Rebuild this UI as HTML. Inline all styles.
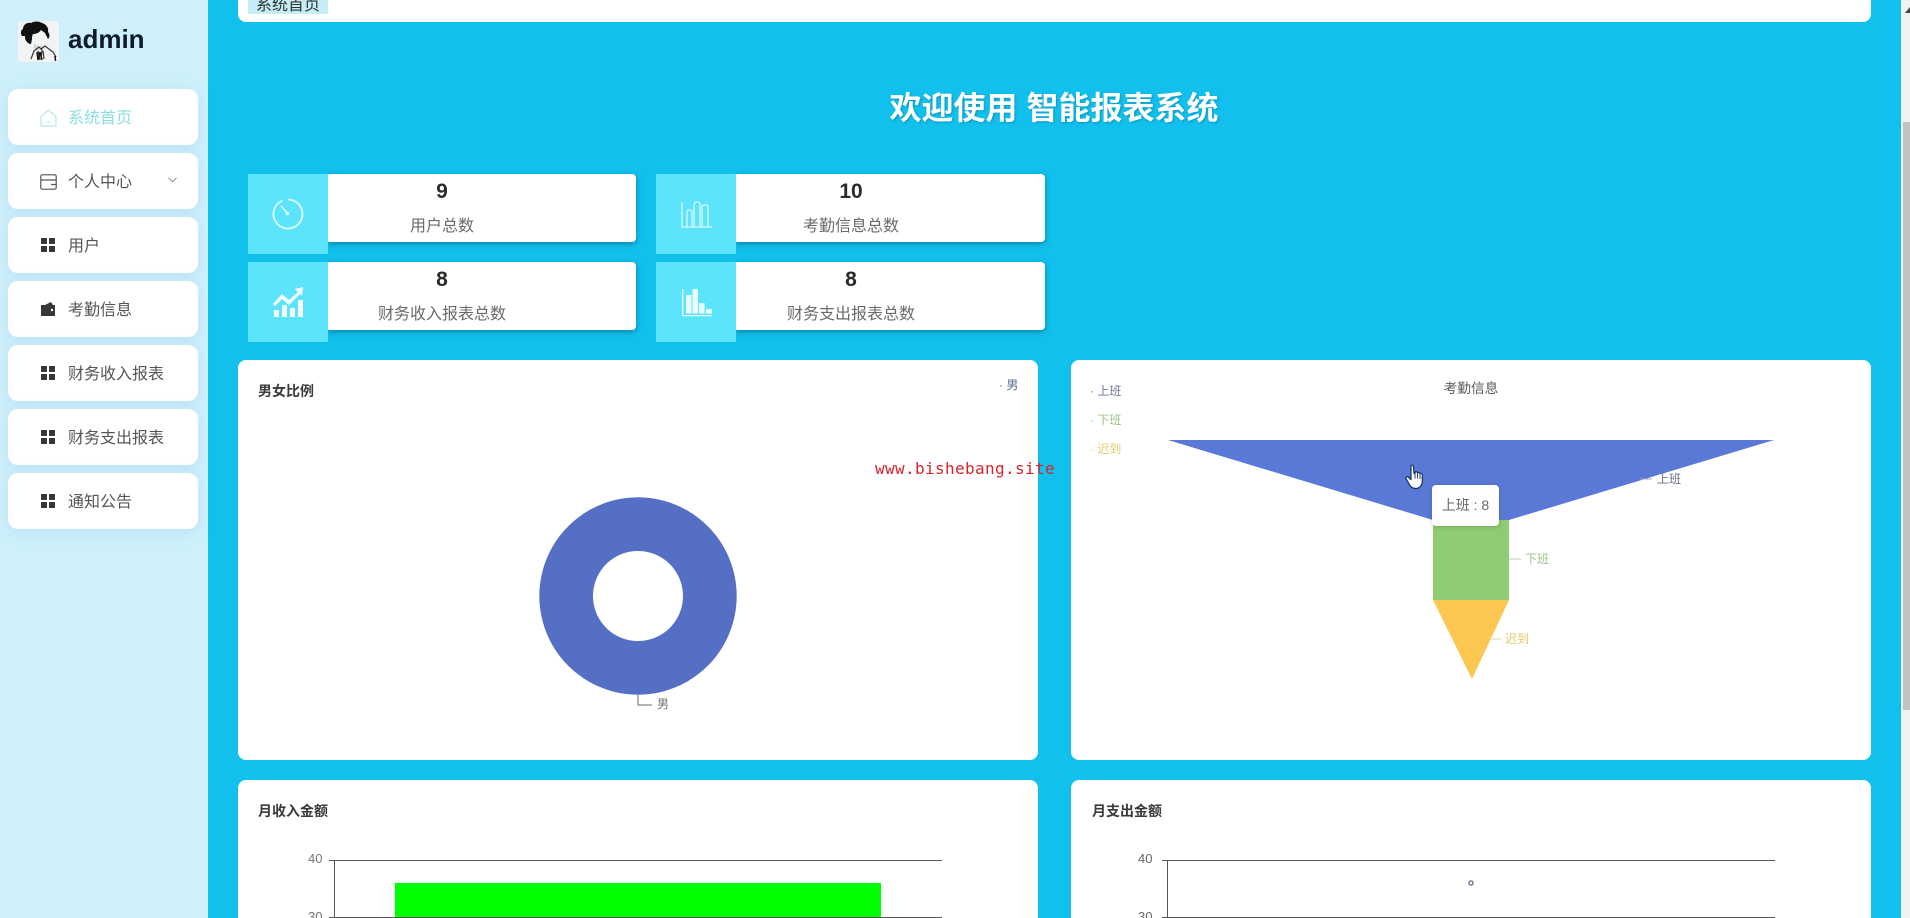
<!DOCTYPE html>
<html lang="zh"><head><meta charset="utf-8"><title>智能报表系统</title>
<style>
html,body{margin:0;padding:0;width:1910px;height:918px;overflow:hidden;background:#11c0ec}
body{position:relative;font-family:"Liberation Sans","Noto Sans CJK SC",sans-serif}
.a{position:absolute;white-space:nowrap}
#side{left:0;top:0;width:208px;height:918px;background:#cdf0fa}
.m{position:absolute;left:8px;width:190px;height:56px;background:#fff;border-radius:10px;box-shadow:0 3px 12px rgba(150,190,240,.28)}
.m span{position:absolute;left:60px;top:2px;line-height:56px;font-size:16px;color:#555;white-space:nowrap}
.m svg{position:absolute;left:32px;top:20px}
.c{position:absolute;background:#fff;border-radius:8px}
.ib{position:absolute;width:80px;height:80px;background:#5ce4fc}
.sb{position:absolute;width:308px;height:68px;background:#fff;border-radius:0 4px 4px 0;box-shadow:0 2px 6px rgba(0,60,90,.45)}
.n{position:absolute;width:190px;text-align:center;font-size:21px;font-weight:bold;color:#2a2a2a;line-height:24px}
.l{position:absolute;width:190px;text-align:center;font-size:16px;color:#6a6a6a;line-height:24px}
.t{position:absolute;font-size:14px;font-weight:bold;color:#3a3a3a;line-height:20px;white-space:nowrap}
.s{position:absolute;font-size:12px;line-height:16px;white-space:nowrap}
</style></head><body>
<div class="a" id="side"></div>

<!-- avatar -->
<svg class="a" style="left:18px;top:21px" width="41" height="41" viewBox="0 0 41 41">
<rect width="41" height="41" rx="3" fill="#f3f3f3"/>
<path d="M4 15C2 12 3 9 5 8 5 4 9 1 13 2c3-2 8-2 11 0 4 1 7 5 6 9 2 2 2 5 0 7l-3-6-4-3c-2 3-5 4-8 4-1 2-1 3-1 5l-1 5c-2 0-3-1-4-2-2-2-2-4-2-6z" fill="#111"/>
<path d="M16 22c2 2 4 3 6 3l2-2 1 3-5 4-4-2z" fill="#d8d8d8"/>
<path d="M13 38l3-8 5-4 3 3-1 9M23 28l4-3 8 6 3 5M20 30l2 9M25 30l1 8" stroke="#333" stroke-width="1.200" fill="none"/>
<path d="M19 31l1 8 2-8 2 8" stroke="#111" stroke-width="1.500" fill="none"/>
<path d="M37 35l.5 5" stroke="#111" stroke-width="1.500"/>
</svg>
<div class="a" style="left:68px;top:24px;font-size:26px;font-weight:bold;line-height:30px;color:#0d1c28">admin</div>

<div class="m" style="top:89px"><svg width="17" height="18" viewBox="0 0 17 18" fill="none" stroke="#b4e8e8" stroke-width="1.2"><path d="M1 7.5L8.5 1 16 7.5V17H1z"/><path d="M7 13h3"/></svg><span style="color:#8adfe4">系统首页</span></div>
<div class="m" style="top:153px"><svg style="top:21px" width="17" height="16" viewBox="0 0 17 16" fill="none" stroke="#555" stroke-width="1.2"><rect x=".8" y=".8" width="15.4" height="14.4" rx="1.5"/><path d="M1 6h15M11 10.500h5"/></svg><span>个人中心</span><svg style="left:160px;top:24px" width="9" height="6" viewBox="0 0 9 6" fill="none" stroke="#888" stroke-width="1"><path d="M.5.800L4.500 4.800 8.500.800"/></svg></div>
<div class="m" style="top:217px"><svg style="left:33px;top:21px" width="14" height="14" fill="#383838"><rect width="6" height="6"/><rect x="8" width="6" height="6"/><rect y="8" width="6" height="6"/><rect x="8" y="8" width="6" height="6"/></svg><span>用户</span></div>
<div class="m" style="top:281px"><svg style="left:33px;top:21px" width="14" height="14" viewBox="0 0 14 14" fill="#383838"><path d="M0 3h14v11H0z"/><path d="M4 3l6-3 2 3z"/><circle cx="11" cy="8" r="1.200" fill="#fff"/></svg><span>考勤信息</span></div>
<div class="m" style="top:345px"><svg style="left:33px;top:21px" width="14" height="14" fill="#383838"><rect width="6" height="6"/><rect x="8" width="6" height="6"/><rect y="8" width="6" height="6"/><rect x="8" y="8" width="6" height="6"/></svg><span>财务收入报表</span></div>
<div class="m" style="top:409px"><svg style="left:33px;top:21px" width="14" height="14" fill="#383838"><rect width="6" height="6"/><rect x="8" width="6" height="6"/><rect y="8" width="6" height="6"/><rect x="8" y="8" width="6" height="6"/></svg><span>财务支出报表</span></div>
<div class="m" style="top:473px"><svg style="left:33px;top:21px" width="14" height="14" fill="#383838"><rect width="6" height="6"/><rect x="8" width="6" height="6"/><rect y="8" width="6" height="6"/><rect x="8" y="8" width="6" height="6"/></svg><span>通知公告</span></div>

<!-- scrollbar -->
<div class="a" style="left:1901px;top:0;width:9px;height:918px;background:#f1f1f1"></div>
<div class="a" style="left:1903px;top:122px;width:7px;height:588px;background:#c1c1c1"></div>
<svg class="a" style="left:1905px;top:7px" width="5" height="6"><path d="M0 6L5 0V6z" fill="#444"/></svg>

<!-- top bar -->
<div class="c" style="left:238px;top:-10px;width:1633px;height:32px"></div>
<div class="a" style="left:248px;top:-6px;width:80px;height:20px;background:#c4edf5;text-align:center;font-size:16px;line-height:24px;color:#333;overflow:hidden">系统首页</div>

<!-- heading -->
<div class="a" style="left:754px;width:600px;top:88px;text-align:center;font-size:32px;font-weight:bold;line-height:40px;color:#fff;text-shadow:1px 1px 2px rgba(0,70,110,.35)">欢迎使用 智能报表系统</div>

<!-- stats -->
<div class="sb" style="left:328px;top:174px"></div>
<div class="ib" style="left:248px;top:174px"></div>
<svg class="a" style="left:272px;top:198px" width="32" height="32" viewBox="0 0 32 32" fill="none" stroke="#e4fbff" stroke-width="1.800"><path d="M10.200 2.700A14.500 14.500 0 1 0 16 1.500"/><path d="M9 8L16 16" stroke-width="1.400"/><circle cx="15.500" cy="15.500" r="1.800" fill="#e4fbff" stroke="none"/></svg>
<div class="n" style="left:347px;top:180px">9</div><div class="l" style="left:347px;top:215px">用户总数</div>

<div class="sb" style="left:736px;top:174px;width:309px"></div>
<div class="ib" style="left:656px;top:174px"></div>
<svg class="a" style="left:681px;top:200px" width="32" height="29" viewBox="0 0 32 29" fill="none" stroke="#d8f8fd" stroke-width="1.300"><path d="M1 2v25h30"/><path d="M6 27V12q0-2 2.500-2T11 12v15M13 27V5q0-3 3-3t3 3v22M21 27V7q0-2 3-2t3 2v20"/></svg>
<div class="n" style="left:756px;top:180px">10</div><div class="l" style="left:756px;top:215px">考勤信息总数</div>

<div class="sb" style="left:328px;top:262px"></div>
<div class="ib" style="left:248px;top:262px"></div>
<svg class="a" style="left:273px;top:287px" width="31" height="31" viewBox="0 0 31 31" fill="#f4feff"><rect x="1" y="23" width="5" height="7"/><rect x="9" y="18" width="5" height="12"/><rect x="17" y="21" width="5" height="9"/><rect x="25" y="13" width="5" height="17"/><path d="M0 17L9 7l7 6L25 5l-3-3 8-2-1 9-2-2-11 11-7-6-7 7z"/></svg>
<div class="n" style="left:347px;top:268px">8</div><div class="l" style="left:347px;top:303px">财务收入报表总数</div>

<div class="sb" style="left:736px;top:262px;width:309px"></div>
<div class="ib" style="left:656px;top:262px"></div>
<svg class="a" style="left:681px;top:288px" width="32" height="30" viewBox="0 0 32 30" fill="#eafcff"><path d="M1 1h1.300v26H31v1.300H1z"/><rect x="5" y="7" width="5.500" height="18.500"/><rect x="11.500" y="1" width="5.500" height="24.500"/><rect x="18" y="15" width="5.500" height="10.500"/><rect x="25" y="21" width="6" height="4.500"/></svg>
<div class="n" style="left:756px;top:268px">8</div><div class="l" style="left:756px;top:303px">财务支出报表总数</div>

<!-- donut card -->
<div class="c" style="left:238px;top:360px;width:800px;height:400px"></div>
<div class="t" style="left:258px;top:381px">男女比例</div>
<div class="s" style="left:999px;top:377px;color:#5a6a90">·&nbsp;男</div>
<svg class="a" style="left:530px;top:490px" width="220" height="230" viewBox="0 0 220 230">
<path fill-rule="evenodd" fill="#546fc4" d="M108 7.300a98.700 98.700 0 1 0 .01 0zM108 61a45 45 0 1 1-.01 0z"/>
<path d="M108 205v10h14" fill="none" stroke="#888" stroke-width="1.300"/></svg>
<div class="s" style="left:657px;top:696px;color:#6e7079">男</div>

<!-- funnel card -->
<div class="c" style="left:1071px;top:360px;width:800px;height:400px"></div>
<div class="a" style="left:1431px;top:379px;width:80px;text-align:center;line-height:20px;color:#5a5a5a;font-size:13.700px">考勤信息</div>
<div class="s" style="left:1090px;top:383px;color:#6a7898">·&nbsp;上班</div>
<div class="s" style="left:1090px;top:412px;color:#9cc488">·&nbsp;下班</div>
<div class="s" style="left:1090px;top:441px;color:#e8cc70">·&nbsp;迟到</div>
<svg class="a" style="left:1160px;top:430px" width="640" height="260" viewBox="1160 430 640 260">
<path d="M1168 440H1774L1509 520H1433z" fill="#5a78d6"/>
<path d="M1433 520H1509V600H1433z" fill="#8fcb72"/>
<path d="M1433 600H1509L1472 679z" fill="#fcc750"/>
<path d="M1640 479h12" stroke="#aab" stroke-width="1"/><path d="M1509 559h12" stroke="#b8ccb0" stroke-width="1"/><path d="M1490 639h11" stroke="#e0d4a8" stroke-width="1"/>
</svg>
<div class="s" style="left:1657px;top:471px;color:#6a6f85">上班</div>
<div class="s" style="left:1525px;top:551px;color:#9cc488">下班</div>
<div class="s" style="left:1505px;top:631px;color:#e4c868">迟到</div>
<div class="a" style="left:1432px;top:485px;width:67px;height:41px;background:#fff;border-radius:4px;box-shadow:0 1px 5px rgba(0,0,0,.18);text-align:center;font-size:14px;line-height:41px;color:#666">上班 : 8</div>
<!-- cursor -->
<svg class="a" style="left:1405px;top:464px" width="20" height="26" viewBox="0 0 20 26"><path d="M6 1.500c1-1 2.500 0 2.500 1L9 9.500l1-.3 0-1c1-.8 2.200-.4 2.500.6 1-.6 2-.2 2.300.6 1-.5 2.500.2 2.500 1.500V17c0 4-2.500 7.500-6.500 7.500-3.500 0-5-1.500-7-5L1 14.500c-.5-1.300 1-2.500 2.200-1.500L6 15.500z" fill="#fff" stroke="#12305a" stroke-width="1.200" stroke-linejoin="round"/><path d="M10 9.500v5M12.500 9v5.500M15 10v5" stroke="#12305a" stroke-width=".9"/></svg>

<!-- bar card -->
<div class="c" style="left:238px;top:780px;width:800px;height:160px"></div>
<div class="t" style="left:258px;top:801px">月收入金额</div>
<div class="s" style="left:308px;top:851px;color:#777;font-size:13px">40</div>
<div class="s" style="left:308px;top:909px;color:#777;font-size:13px">30</div>
<svg class="a" style="left:320px;top:850px" width="640" height="68" viewBox="320 850 640 68">
<rect x="395" y="883" width="486" height="35" fill="#00ff00"/>
<path d="M329 860.500H942M329 917.500H942M334.500 860V918" stroke="#555" stroke-width="1" fill="none"/></svg>

<!-- line card -->
<div class="c" style="left:1071px;top:780px;width:800px;height:160px"></div>
<div class="t" style="left:1092px;top:801px">月支出金额</div>
<div class="s" style="left:1138px;top:851px;color:#666;font-size:13px">40</div>
<div class="s" style="left:1138px;top:909px;color:#666;font-size:13px">30</div>
<svg class="a" style="left:1155px;top:850px" width="640" height="68" viewBox="1155 850 640 68">
<path d="M1162 860.500H1775M1162 917.500H1775M1167.500 860V918" stroke="#555" stroke-width="1" fill="none"/>
<circle cx="1471" cy="883" r="2" fill="#fff" stroke="#7a7a9a" stroke-width="1.500"/></svg>

<!-- watermark -->
<div class="a" style="left:875px;top:458px;font-family:'DejaVu Sans Mono','Liberation Mono',monospace;font-size:16px;letter-spacing:.37px;line-height:22px;color:#d9232b">www.bishebang.site</div>
</body></html>
